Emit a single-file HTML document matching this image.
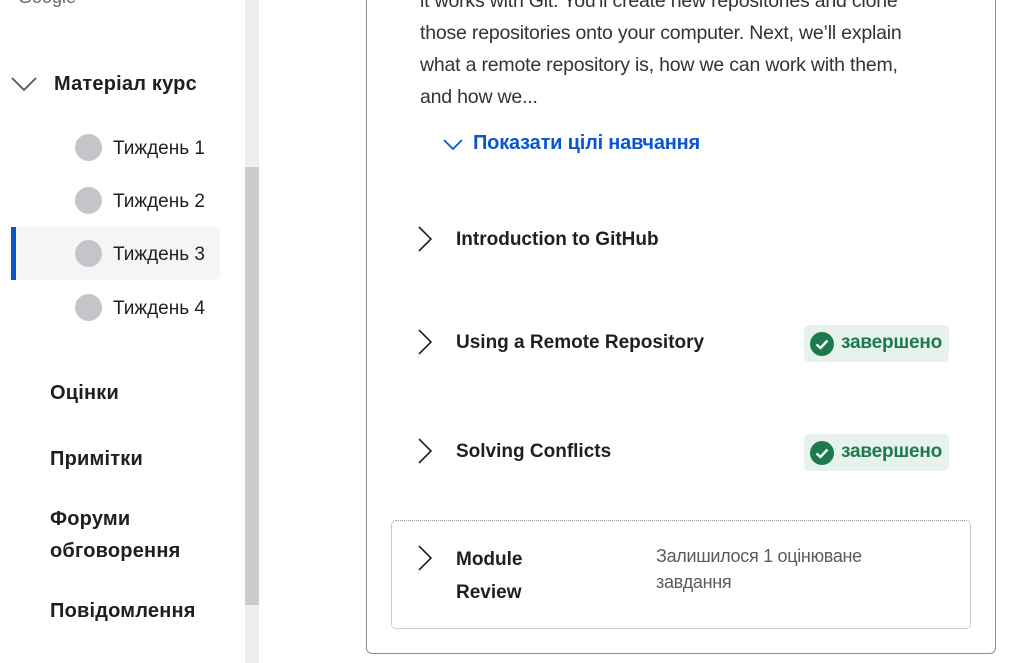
<!DOCTYPE html>
<html><head><meta charset="utf-8"><style>
*{margin:0;padding:0;box-sizing:border-box}
body{width:1017px;height:663px;overflow:hidden;background:#fff;position:relative;font-family:"Liberation Sans",sans-serif;color:#1f1f1f}
.a{position:absolute;white-space:nowrap}
.side{font-size:20px;font-weight:bold;color:#1f1f1f;letter-spacing:0.2px}
.wk{font-size:19px;color:#1f1f1f}
.dot{position:absolute;width:27px;height:27px;border-radius:50%;background:#c4c5c8}
.p{font-size:19.5px;color:#333;letter-spacing:-0.2px}
.h{font-size:19px;font-weight:bold;letter-spacing:0;color:#1f1f1f}
.badge{position:absolute;width:145px;height:37px;background:#e8f2ed;border-radius:5px}
.badge span{position:absolute;left:37px;top:7px;font-size:19px;font-weight:bold;color:#1d7a4c;letter-spacing:-0.2px}
.badge svg{position:absolute;left:6px;top:7px}
</style></head><body>
<div class="a" style="left:18px;top:-13px;font-size:18px;color:#666">Google</div>
<svg class="a" style="left:10px;top:75px" width="30" height="20"><path d="M2 3 L14 15 L26 3" fill="none" stroke="#555" stroke-width="1.8"/></svg>
<div class="a side" style="left:54px;top:73px">Матеріал курс</div>
<div style="position:absolute;left:11px;top:227px;width:209px;height:53px;background:#f4f5f7;border-radius:0 5px 5px 0"></div>
<div style="position:absolute;left:11px;top:227px;width:5px;height:53px;background:#0a56d0"></div>
<div class="dot" style="left:75px;top:134px"></div><div class="a wk" style="left:113px;top:138px">Тиждень 1</div>
<div class="dot" style="left:75px;top:187px"></div><div class="a wk" style="left:113px;top:191px">Тиждень 2</div>
<div class="dot" style="left:75px;top:240px"></div><div class="a wk" style="left:113px;top:244px">Тиждень 3</div>
<div class="dot" style="left:75px;top:294px"></div><div class="a wk" style="left:113px;top:298px">Тиждень 4</div>
<div class="a side" style="left:50px;top:382px">Оцінки</div>
<div class="a side" style="left:50px;top:448px">Примітки</div>
<div class="a side" style="left:50px;top:503px;line-height:32px">Форуми<br>обговорення</div>
<div class="a side" style="left:50px;top:600px">Повідомлення</div>
<div style="position:absolute;left:245px;top:0;width:14px;height:663px;background:#efefef"></div>
<div style="position:absolute;left:245px;top:167px;width:14px;height:438px;background:#cbcbcb"></div>

<div style="position:absolute;left:366px;top:-10px;width:630px;height:664px;border:1px solid #8f8f8f;border-radius:6px"></div>
<div class="a p" style="left:420px;top:-15px;line-height:32px">it works with Git. You'll create new repositories and clone<br>those repositories onto your computer. Next, we’ll explain<br>what a remote repository is, how we can work with them,<br>and how we...</div>
<svg class="a" style="left:442px;top:137px" width="22" height="16"><path d="M2 3 L11 12 L20 3" fill="none" stroke="#0a56d0" stroke-width="1.8"/></svg>
<div class="a" style="left:473px;top:132px;font-size:20px;font-weight:bold;color:#0a56d0;letter-spacing:-0.2px">Показати цілі навчання</div>

<svg class="a" style="left:416px;top:225px" width="20" height="28"><path d="M3 2 L15 14 L3 26" fill="none" stroke="#222" stroke-width="1.6"/></svg>
<div class="a h" style="left:456px;top:229px">Introduction to GitHub</div>
<svg class="a" style="left:416px;top:328px" width="20" height="28"><path d="M3 2 L15 14 L3 26" fill="none" stroke="#222" stroke-width="1.6"/></svg>
<div class="a h" style="left:456px;top:332px">Using a Remote Repository</div>
<div class="badge" style="left:804px;top:325px"><svg width="24" height="24"><circle cx="12" cy="12" r="12" fill="#1d7a4c"/><path d="M6.5 12.5 L10.5 16 L17.5 8.5" fill="none" stroke="#fff" stroke-width="2.4"/></svg><span>завершено</span></div>
<svg class="a" style="left:416px;top:437px" width="20" height="28"><path d="M3 2 L15 14 L3 26" fill="none" stroke="#222" stroke-width="1.6"/></svg>
<div class="a h" style="left:456px;top:441px">Solving Conflicts</div>
<div class="badge" style="left:804px;top:434px"><svg width="24" height="24"><circle cx="12" cy="12" r="12" fill="#1d7a4c"/><path d="M6.5 12.5 L10.5 16 L17.5 8.5" fill="none" stroke="#fff" stroke-width="2.4"/></svg><span>завершено</span></div>

<div style="position:absolute;left:391px;top:520px;width:580px;height:109px;border:1px dotted #999;border-radius:5px"></div>
<svg class="a" style="left:416px;top:544px" width="20" height="28"><path d="M3 2 L15 14 L3 26" fill="none" stroke="#222" stroke-width="1.6"/></svg>
<div class="a h" style="left:456px;top:543px;line-height:33px">Module<br>Review</div>
<div class="a" style="left:656px;top:543px;font-size:18px;color:#5b5b5b;line-height:26px;letter-spacing:-0.3px">Залишилося 1 оцінюване<br>завдання</div>
</body></html>
